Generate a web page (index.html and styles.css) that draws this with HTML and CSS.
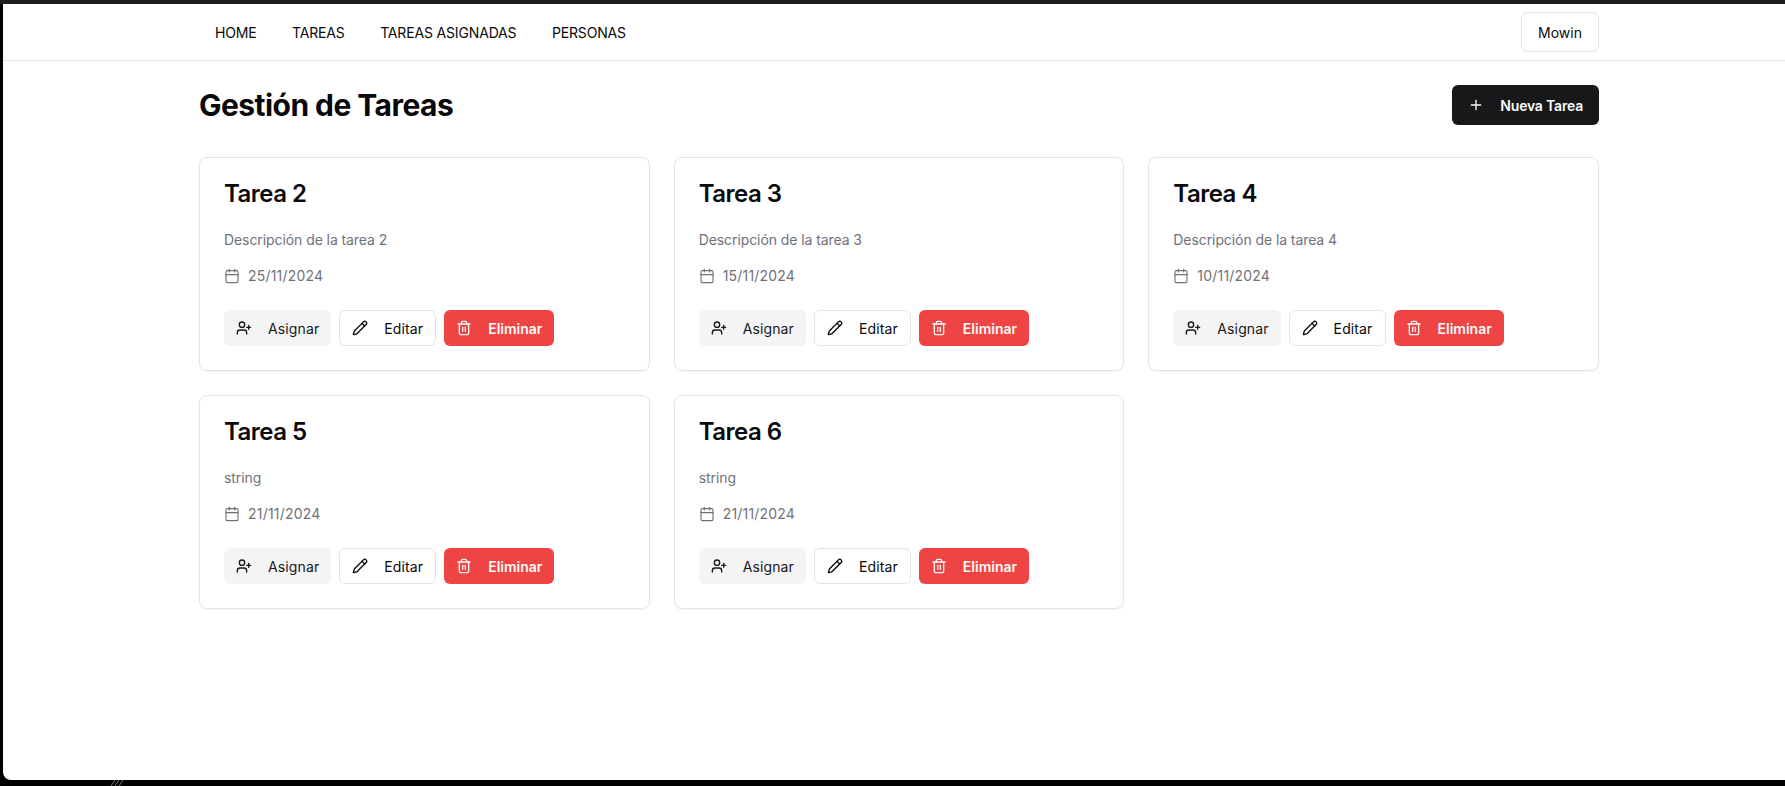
FILE: index.html
```html
<!DOCTYPE html>
<html lang="en">
<head>
  <meta charset="UTF-8">
  <title>Gestión de Tareas</title>
  <link rel="stylesheet" href="styles.css">
</head>
<body>
  <div class="window">
    <header class="navbar">
      <div class="navbar-inner">
        <nav class="nav-links">
          <a href="#">HOME</a>
          <a href="#">TAREAS</a>
          <a href="#">TAREAS ASIGNADAS</a>
          <a href="#">PERSONAS</a>
        </nav>
        <button class="user-btn">Mowin</button>
      </div>
    </header>

    <main class="content">
      <div class="page-head">
        <h1>Gestión de Tareas</h1>
        <button class="btn btn-dark">
          <svg class="icon" viewBox="0 0 24 24"><path d="M5 12h14"/><path d="M12 5v14"/></svg>
          Nueva Tarea
        </button>
      </div>

      <div class="task-grid">
        <div class="task-card">
          <h2>Tarea 2</h2>
          <p class="task-desc">Descripción de la tarea 2</p>
          <div class="task-date">
            <svg class="icon" viewBox="0 0 24 24"><path d="M8 2v4"/><path d="M16 2v4"/><rect x="3" y="4" width="18" height="18" rx="2"/><path d="M3 10h18"/></svg>
            25/11/2024
          </div>
          <div class="task-actions">
            <button class="btn btn-grey"><svg class="icon" viewBox="0 0 24 24"><path d="M16 21v-2a4 4 0 0 0-4-4H6a4 4 0 0 0-4 4v2"/><circle cx="9" cy="7" r="4"/><path d="M19 8v6"/><path d="M22 11h-6"/></svg>Asignar</button>
            <button class="btn btn-outline"><svg class="icon" viewBox="0 0 24 24"><path d="M21.17 6.81a1 1 0 0 0-3.99-3.99L3.84 16.17a2 2 0 0 0-.5.83l-1.32 4.35a.5.5 0 0 0 .62.62l4.35-1.32a2 2 0 0 0 .83-.5z"/><path d="m15 5 4 4"/></svg>Editar</button>
            <button class="btn btn-red"><svg class="icon" viewBox="0 0 24 24"><path d="M3 6h18"/><path d="M19 6v14a2 2 0 0 1-2 2H7a2 2 0 0 1-2-2V6"/><path d="M8 6V4a2 2 0 0 1 2-2h4a2 2 0 0 1 2 2v2"/><path d="M10 11v6"/><path d="M14 11v6"/></svg>Eliminar</button>
          </div>
        </div>

        <div class="task-card">
          <h2>Tarea 3</h2>
          <p class="task-desc">Descripción de la tarea 3</p>
          <div class="task-date">
            <svg class="icon" viewBox="0 0 24 24"><path d="M8 2v4"/><path d="M16 2v4"/><rect x="3" y="4" width="18" height="18" rx="2"/><path d="M3 10h18"/></svg>
            15/11/2024
          </div>
          <div class="task-actions">
            <button class="btn btn-grey"><svg class="icon" viewBox="0 0 24 24"><path d="M16 21v-2a4 4 0 0 0-4-4H6a4 4 0 0 0-4 4v2"/><circle cx="9" cy="7" r="4"/><path d="M19 8v6"/><path d="M22 11h-6"/></svg>Asignar</button>
            <button class="btn btn-outline"><svg class="icon" viewBox="0 0 24 24"><path d="M21.17 6.81a1 1 0 0 0-3.99-3.99L3.84 16.17a2 2 0 0 0-.5.83l-1.32 4.35a.5.5 0 0 0 .62.62l4.35-1.32a2 2 0 0 0 .83-.5z"/><path d="m15 5 4 4"/></svg>Editar</button>
            <button class="btn btn-red"><svg class="icon" viewBox="0 0 24 24"><path d="M3 6h18"/><path d="M19 6v14a2 2 0 0 1-2 2H7a2 2 0 0 1-2-2V6"/><path d="M8 6V4a2 2 0 0 1 2-2h4a2 2 0 0 1 2 2v2"/><path d="M10 11v6"/><path d="M14 11v6"/></svg>Eliminar</button>
          </div>
        </div>

        <div class="task-card">
          <h2>Tarea 4</h2>
          <p class="task-desc">Descripción de la tarea 4</p>
          <div class="task-date">
            <svg class="icon" viewBox="0 0 24 24"><path d="M8 2v4"/><path d="M16 2v4"/><rect x="3" y="4" width="18" height="18" rx="2"/><path d="M3 10h18"/></svg>
            10/11/2024
          </div>
          <div class="task-actions">
            <button class="btn btn-grey"><svg class="icon" viewBox="0 0 24 24"><path d="M16 21v-2a4 4 0 0 0-4-4H6a4 4 0 0 0-4 4v2"/><circle cx="9" cy="7" r="4"/><path d="M19 8v6"/><path d="M22 11h-6"/></svg>Asignar</button>
            <button class="btn btn-outline"><svg class="icon" viewBox="0 0 24 24"><path d="M21.17 6.81a1 1 0 0 0-3.99-3.99L3.84 16.17a2 2 0 0 0-.5.83l-1.32 4.35a.5.5 0 0 0 .62.62l4.35-1.32a2 2 0 0 0 .83-.5z"/><path d="m15 5 4 4"/></svg>Editar</button>
            <button class="btn btn-red"><svg class="icon" viewBox="0 0 24 24"><path d="M3 6h18"/><path d="M19 6v14a2 2 0 0 1-2 2H7a2 2 0 0 1-2-2V6"/><path d="M8 6V4a2 2 0 0 1 2-2h4a2 2 0 0 1 2 2v2"/><path d="M10 11v6"/><path d="M14 11v6"/></svg>Eliminar</button>
          </div>
        </div>

        <div class="task-card">
          <h2>Tarea 5</h2>
          <p class="task-desc">string</p>
          <div class="task-date">
            <svg class="icon" viewBox="0 0 24 24"><path d="M8 2v4"/><path d="M16 2v4"/><rect x="3" y="4" width="18" height="18" rx="2"/><path d="M3 10h18"/></svg>
            21/11/2024
          </div>
          <div class="task-actions">
            <button class="btn btn-grey"><svg class="icon" viewBox="0 0 24 24"><path d="M16 21v-2a4 4 0 0 0-4-4H6a4 4 0 0 0-4 4v2"/><circle cx="9" cy="7" r="4"/><path d="M19 8v6"/><path d="M22 11h-6"/></svg>Asignar</button>
            <button class="btn btn-outline"><svg class="icon" viewBox="0 0 24 24"><path d="M21.17 6.81a1 1 0 0 0-3.99-3.99L3.84 16.17a2 2 0 0 0-.5.83l-1.32 4.35a.5.5 0 0 0 .62.62l4.35-1.32a2 2 0 0 0 .83-.5z"/><path d="m15 5 4 4"/></svg>Editar</button>
            <button class="btn btn-red"><svg class="icon" viewBox="0 0 24 24"><path d="M3 6h18"/><path d="M19 6v14a2 2 0 0 1-2 2H7a2 2 0 0 1-2-2V6"/><path d="M8 6V4a2 2 0 0 1 2-2h4a2 2 0 0 1 2 2v2"/><path d="M10 11v6"/><path d="M14 11v6"/></svg>Eliminar</button>
          </div>
        </div>

        <div class="task-card">
          <h2>Tarea 6</h2>
          <p class="task-desc">string</p>
          <div class="task-date">
            <svg class="icon" viewBox="0 0 24 24"><path d="M8 2v4"/><path d="M16 2v4"/><rect x="3" y="4" width="18" height="18" rx="2"/><path d="M3 10h18"/></svg>
            21/11/2024
          </div>
          <div class="task-actions">
            <button class="btn btn-grey"><svg class="icon" viewBox="0 0 24 24"><path d="M16 21v-2a4 4 0 0 0-4-4H6a4 4 0 0 0-4 4v2"/><circle cx="9" cy="7" r="4"/><path d="M19 8v6"/><path d="M22 11h-6"/></svg>Asignar</button>
            <button class="btn btn-outline"><svg class="icon" viewBox="0 0 24 24"><path d="M21.17 6.81a1 1 0 0 0-3.99-3.99L3.84 16.17a2 2 0 0 0-.5.83l-1.32 4.35a.5.5 0 0 0 .62.62l4.35-1.32a2 2 0 0 0 .83-.5z"/><path d="m15 5 4 4"/></svg>Editar</button>
            <button class="btn btn-red"><svg class="icon" viewBox="0 0 24 24"><path d="M3 6h18"/><path d="M19 6v14a2 2 0 0 1-2 2H7a2 2 0 0 1-2-2V6"/><path d="M8 6V4a2 2 0 0 1 2-2h4a2 2 0 0 1 2 2v2"/><path d="M10 11v6"/><path d="M14 11v6"/></svg>Eliminar</button>
          </div>
        </div>
      </div>
    </main>
  </div>

  <svg class="hatch" viewBox="0 0 16 6"><path d="M1 6l4-6M5 6l4-6M9 6l4-6"/></svg>
</body>
</html>
```

FILE: styles.css
```css
html, body {
  height: 100%;
}
body {
  margin: 0;
  background-color: #000;
  border-top: 4px solid #1f1f1f;
  box-sizing: border-box;
  padding: 0 0 6px 3px;
  font-family: "Inter", "Liberation Sans", sans-serif;
  color: #09090b;
  overflow: hidden;
  position: relative;
}
.window {
  height: 100%;
  background-color: #fff;
  border-bottom-left-radius: 8px;
}
.hatch {
  position: absolute;
  left: 110px;
  bottom: 0;
  width: 16px;
  height: 6px;
  fill: none;
  stroke: #777;
  stroke-width: 1;
}
.navbar {
  height: 56px;
  border-bottom: 1px solid #e4e4e7;
  padding-left: 196px;
  padding-right: 186px;
}
.navbar-inner {
  height: 100%;
  display: flex;
  align-items: center;
  justify-content: space-between;
}
.nav-links {
  display: flex;
  gap: 35.5px;
  padding-left: 16px;
}
.nav-links a {
  color: #09090b;
  text-decoration: none;
  font-size: 14px;
  letter-spacing: -0.16px;
}
.user-btn {
  height: 40px;
  padding: 0 16px;
  font-family: inherit;
  font-size: 14px;
  font-weight: 400;
  color: #09090b;
  background-color: #fff;
  border: 1px solid #e4e4e7;
  border-radius: 6px;
}
.content {
  padding: 24px 186px 0 196px;
}
.page-head {
  display: flex;
  align-items: center;
  justify-content: space-between;
  margin-bottom: 32px;
}
h1 {
  margin: 0;
  font-size: 30px;
  line-height: 36px;
  font-weight: 700;
  letter-spacing: -0.55px;
}
.task-grid {
  display: grid;
  grid-template-columns: repeat(3, 1fr);
  gap: 24px;
}
.task-card {
  border: 1px solid #e4e4e7;
  border-radius: 8px;
  padding: 24px;
  box-shadow: 0 1px 2px rgba(0, 0, 0, 0.05);
}
h2 {
  margin: 0;
  font-size: 24px;
  line-height: 24px;
  font-weight: 600;
  letter-spacing: -0.5px;
}
.task-desc {
  margin: 24px 0 16px;
  font-size: 14px;
  line-height: 20px;
  letter-spacing: -0.08px;
  color: #71717a;
}
.task-date {
  display: flex;
  align-items: center;
  gap: 8px;
  font-size: 14px;
  line-height: 20px;
  letter-spacing: 0.2px;
  color: #71717a;
}
.task-actions {
  display: flex;
  gap: 8px;
  margin-top: 24px;
}
.btn {
  display: inline-flex;
  align-items: center;
  gap: 16px;
  height: 36px;
  padding: 0 12px;
  box-sizing: border-box;
  font-family: inherit;
  font-size: 14px;
  font-weight: 400;
  letter-spacing: 0.12px;
  border: 0;
  border-radius: 6px;
}
.icon {
  width: 16px;
  height: 16px;
  fill: none;
  stroke: currentColor;
  stroke-width: 2;
  stroke-linecap: round;
  stroke-linejoin: round;
}
.task-date .icon {
  stroke-width: 1.7;
}
.btn-dark {
  height: 40px;
  padding: 0 16px;
  background-color: #18181b;
  color: #fafafa;
  font-weight: 600;
  letter-spacing: -0.2px;
}
.btn-grey {
  background-color: #f4f4f5;
  color: #18181b;
}
.btn-outline {
  background-color: #fff;
  color: #09090b;
  border: 1px solid #e4e4e7;
}
.btn-red {
  background-color: #ef4444;
  color: #fafafa;
  font-weight: 600;
  letter-spacing: 0;
}
```
